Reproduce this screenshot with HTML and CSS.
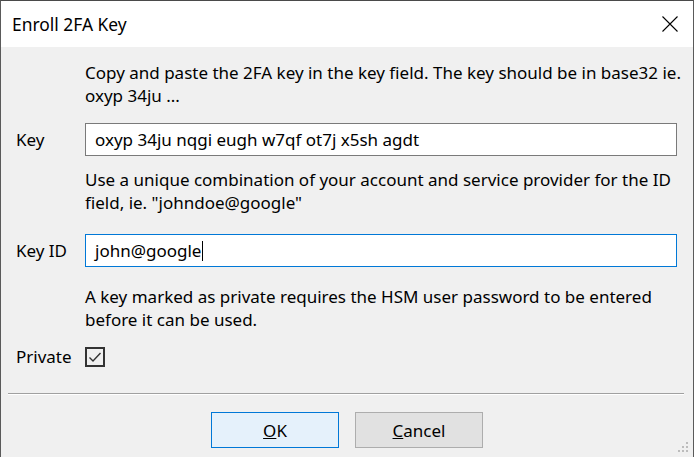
FILE: index.html
```html
<!DOCTYPE html>
<html lang="en">
<head>
    <meta charset="UTF-8">
    <meta name="viewport" content="width=device-width, initial-scale=1.0">
    <title>Enroll 2FA Key</title>
    <link rel="stylesheet" href="styles.css">
</head>
<body>
    <div class="window">
        <div class="titlebar">
            <span class="title">Enroll 2FA Key</span>
            <span class="close">
                <svg width="16" height="16" viewBox="0 0 16 16">
                    <path d="M0.5 0.5 L15.5 15.5 M15.5 0.5 L0.5 15.5" stroke="#000" stroke-width="1.1" fill="none"/>
                </svg>
            </span>
        </div>
        <div class="content">
            <div class="form">
                <div></div>
                <p class="hint hint-key">Copy and paste the 2FA key in the key field. The key should be in base32 ie. oxyp 34ju ...</p>

                <label class="label">Key</label>
                <div class="field">oxyp 34ju nqgi eugh w7qf ot7j x5sh agdt</div>

                <div></div>
                <p class="hint hint-id">Use a unique combination of your account and service provider for the ID field, ie. "johndoe@google"</p>

                <label class="label">Key ID</label>
                <div class="field focused">john@google<span class="caret"></span></div>

                <div></div>
                <p class="hint hint-private">A key marked as private requires the HSM user password to be entered before it can be used.</p>

                <label class="label">Private</label>
                <div class="check-row">
                    <span class="checkbox">
                        <svg width="16" height="16" viewBox="0 0 16 16">
                            <path d="M2.5 8.5 L6 12 L13.5 4" stroke="#333" stroke-width="1.4" fill="none"/>
                        </svg>
                    </span>
                </div>
            </div>
            <div class="separator"></div>
            <div class="buttons">
                <button class="btn btn-default"><u>O</u>K</button>
                <button class="btn"><u>C</u>ancel</button>
            </div>
            <svg class="grip" width="12" height="12" viewBox="0 0 12 12">
                <rect x="9" y="0" width="2" height="2" fill="#bcbcbc"/>
                <rect x="5" y="4" width="2" height="2" fill="#bcbcbc"/>
                <rect x="9" y="4" width="2" height="2" fill="#bcbcbc"/>
                <rect x="1" y="8" width="2" height="2" fill="#bcbcbc"/>
                <rect x="5" y="8" width="2" height="2" fill="#bcbcbc"/>
                <rect x="9" y="8" width="2" height="2" fill="#bcbcbc"/>
            </svg>
        </div>
    </div>
</body>
</html>
```

FILE: styles.css
```css
html, body {
    margin: 0;
    padding: 0;
}
body {
    font-family: "Noto Sans", "Open Sans", sans-serif;
    font-size: 17px;
    color: #000;
    background-color: #f0f0f0;
}
.window {
    width: 694px;
    height: 457px;
    box-sizing: border-box;
    border-top: 1px solid #4a4a4a;
    border-left: 1px solid #5a5a5a;
    border-right: 1px solid #5a5a5a;
    display: flex;
    flex-direction: column;
}
.titlebar {
    height: 46px;
    background-color: #fff;
    display: flex;
    align-items: center;
    justify-content: space-between;
    padding-left: 11px;
    padding-right: 15px;
}
.title {
    font-size: 17.4px;
}
.close {
    display: flex;
}
.content {
    flex: 1;
    position: relative;
    padding: 14px 15px 0 15px;
}
.form {
    display: grid;
    grid-template-columns: 69px 592px;
    align-items: center;
}
.hint {
    margin: 0 -12px 0 0;
    line-height: 23px;
}
.hint-key {
    margin-bottom: 16px;
}
.hint-id {
    margin-top: 12px;
    margin-bottom: 20px;
}
.hint-private {
    margin-top: 18px;
    margin-bottom: 14px;
}
.label {
    display: block;
}
.field {
    height: 33px;
    box-sizing: border-box;
    border: 1px solid #7a7a7a;
    background-color: #fff;
    padding: 0 9px;
    display: flex;
    align-items: center;
}
.field.focused {
    border-color: #0078d7;
}
.caret {
    display: inline-block;
    width: 1px;
    height: 20px;
    background-color: #000;
    margin-left: 1px;
}
.check-row {
    display: flex;
    align-items: center;
    height: 20px;
}
.checkbox {
    width: 20px;
    height: 20px;
    box-sizing: border-box;
    border: 2px solid #333;
    display: flex;
    align-items: center;
    justify-content: center;
}
.separator {
    margin: 25px -6px 0 -8px;
    height: 1px;
    border-top: 1px solid #a0a0a0;
    background-color: #fff;
}
.buttons {
    display: flex;
    justify-content: center;
    gap: 16px;
    margin-top: 17px;
}
.btn {
    width: 128px;
    height: 36px;
    font-family: inherit;
    font-size: 17px;
    background-color: #e1e1e1;
    border: 1px solid #adadad;
    color: #000;
    padding: 0;
}
.btn-default {
    background-color: #e5f1fb;
    border-color: #0078d7;
}
.grip {
    position: absolute;
    right: 4px;
    bottom: 3px;
}
```
